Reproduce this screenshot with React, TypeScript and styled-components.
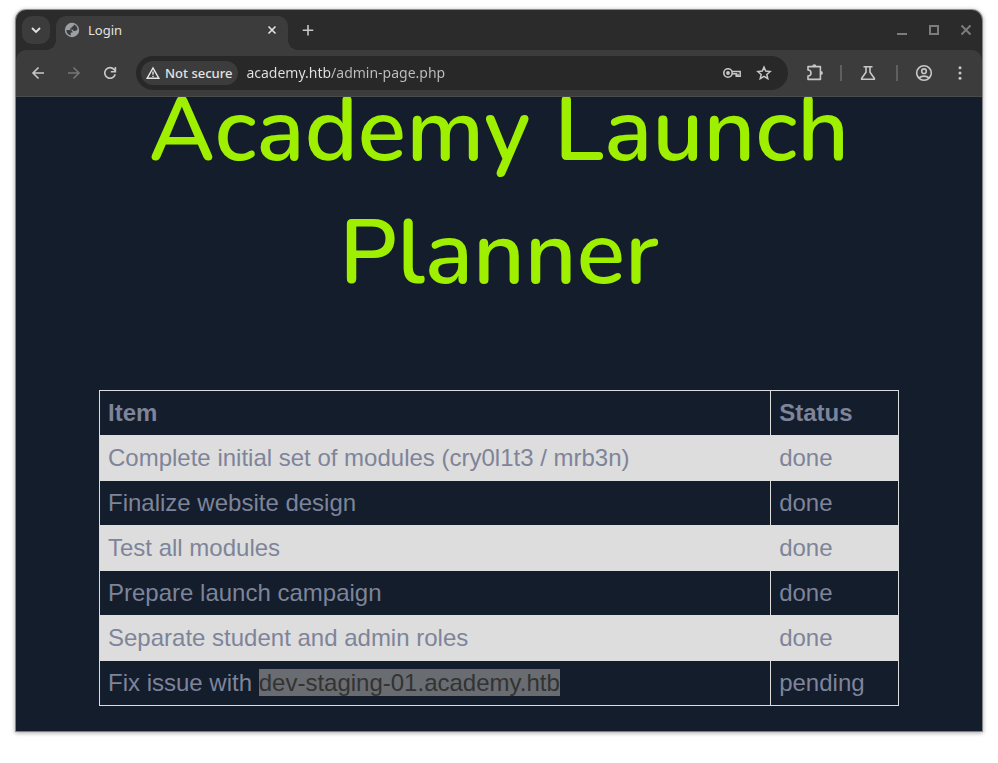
import React from "react";
import styled, { createGlobalStyle, css } from "styled-components";

const GlobalStyle = createGlobalStyle`
  *, *::before, *::after { box-sizing: border-box; }
  body {
    margin: 0;
    background: #ffffff;
    font-family: "Noto Sans", sans-serif;
  }
`;

const BrowserWindow = styled.div`
  margin: 10px 16px 32px;
  border-radius: 10px 10px 0 0;
  background: #2b2b2b;
  box-shadow: 0 0 0 1px rgba(0, 0, 0, 0.35), 0 1px 4px 1px rgba(0, 0, 0, 0.35);
`;

const TabStrip = styled.header`
  display: flex;
  align-items: center;
  height: 40px;
  padding: 0 6px;
`;

const iconButton = css`
  display: flex;
  flex: none;
  align-items: center;
  justify-content: center;
  margin: 0;
  padding: 0;
  border: 0;
  background: transparent;
  color: #c7c7c7;
`;

const TabSearchButton = styled.button`
  ${iconButton}
  width: 28px;
  height: 28px;
  border-radius: 10px;
  background: #3c3c3c;
  color: #e3e3e3;
`;

const Tab = styled.div`
  position: relative;
  display: flex;
  flex: 0 1 232px;
  align-items: center;
  align-self: flex-end;
  gap: 8px;
  height: 34px;
  margin-left: 6px;
  padding: 0 8px 6px;
  border-radius: 10px 10px 0 0;
  background: #3c3c3c;
  color: #e3e3e3;

  &::before,
  &::after {
    content: "";
    position: absolute;
    bottom: 0;
    width: 10px;
    height: 10px;
  }
  &::before {
    right: 100%;
    background: radial-gradient(circle at 0 0, transparent 10px, #3c3c3c 10px);
  }
  &::after {
    left: 100%;
    background: radial-gradient(circle at 100% 0, transparent 10px, #3c3c3c 10px);
  }
`;

const TabTitle = styled.span`
  flex: 1;
  font-size: 13px;
  line-height: 20px;
`;

const TabCloseButton = styled.button`
  ${iconButton}
  width: 16px;
  height: 16px;
  color: #e3e3e3;
`;

const NewTabButton = styled.button`
  ${iconButton}
  width: 28px;
  height: 28px;
  margin-left: 6px;
`;

const WindowControls = styled.div`
  display: flex;
  gap: 16px;
  margin-left: auto;
  padding-right: 2px;
`;

const WindowButton = styled.button`
  ${iconButton}
  width: 16px;
  height: 16px;
  color: #7c7c7c;
`;

const Toolbar = styled.nav`
  display: flex;
  align-items: center;
  height: 47px;
  padding: 0 8px;
  border-bottom: 1px solid #4a4a4a;
  border-radius: 10px 10px 0 0;
  background: #3c3c3c;
`;

const ButtonGroup = styled.div`
  display: flex;
  gap: 8px;
`;

const ToolButton = styled.button<{ $dim?: boolean }>`
  ${iconButton}
  width: 28px;
  height: 28px;
  color: ${(p) => (p.$dim ? "#757575" : "#c7c7c7")};
`;

const AddressBar = styled.div`
  display: flex;
  flex: 1;
  align-items: center;
  min-width: 0;
  height: 34px;
  margin: 0 13px 0 12px;
  padding: 0 10px 0 5px;
  border-radius: 17px;
  background: #282828;
`;

const SecurityChip = styled.button`
  display: flex;
  flex: none;
  align-items: center;
  gap: 4px;
  height: 24px;
  padding: 0 6px 0 4px;
  border: 0;
  border-radius: 12px;
  background: #3c3c3c;
  color: #e3e3e3;
  font: 500 13px/20px "Noto Sans", sans-serif;
  white-space: nowrap;
`;

const AddressInput = styled.input`
  flex: 1;
  min-width: 0;
  height: 24px;
  padding: 0;
  margin-left: 8px;
  border: 0;
  outline: 0;
  background: linear-gradient(to right, #e3e3e3 84px, #c0c0c0 84px);
  background-clip: text;
  -webkit-background-clip: text;
  color: transparent;
  font: 14px/24px "Noto Sans", sans-serif;
`;

const AddressActions = styled.div`
  display: flex;
  gap: 4px;
`;

const Extras = styled.div`
  display: flex;
  align-items: center;
`;

const Divider = styled.span<{ $spaced?: boolean }>`
  width: 2px;
  height: 16px;
  margin: ${(p) => (p.$spaced ? "0 12px 0 14px" : "0 12px 0 11px")};
  background: #5f5f5f;
`;

const ProfileGroup = styled.div`
  display: flex;
  gap: 8px;
`;

const PageView = styled.main`
  overflow: hidden;
  padding: 0 24px 25px;
  background: #141d2b;
`;

const Heading = styled.h1`
  max-width: 800px;
  margin: -28px auto 75px;
  color: #9fef00;
  font-family: Nunito, Lato, sans-serif;
  font-size: 90px;
  font-weight: 600;
  line-height: 123px;
  text-align: center;
`;

const PlannerTable = styled.table`
  width: 100%;
  max-width: 800px;
  margin: 0 auto;
  border-collapse: collapse;
  color: #7e8499;
  font-family: "Liberation Sans", Arial, sans-serif;
  font-size: 24px;
  line-height: 28px;
  text-align: left;
`;

const Row = styled.tr<{ $shaded?: boolean }>`
  background: ${(p) => (p.$shaded ? "#dddddd" : "transparent")};
`;

const HeadCell = styled.th<{ $narrow?: boolean }>`
  width: ${(p) => (p.$narrow ? "16%" : "84%")};
  padding: 8px;
  border: 1px solid #dddddd;
  font-weight: 700;
`;

const Cell = styled.td`
  padding: 8px;
  border: 1px solid #dddddd;
`;

const Selected = styled.mark`
  background: #696c70;
  color: #333333;
`;

type IconProps = { size?: number; view?: number; children: React.ReactNode };

const Line = ({ size = 16, view = 16, children }: IconProps) => (
  <svg
    width={size}
    height={size}
    viewBox={`0 0 ${view} ${view}`}
    fill="none"
    stroke="currentColor"
    strokeWidth="1.6"
    aria-hidden="true"
  >
    {children}
  </svg>
);

const rows = [
  { item: "Complete initial set of modules (cry0l1t3 / mrb3n)", status: "done" },
  { item: "Finalize website design", status: "done" },
  { item: "Test all modules", status: "done" },
  { item: "Prepare launch campaign", status: "done" },
  { item: "Separate student and admin roles", status: "done" },
  { item: "Fix issue with ", selected: "dev-staging-01.academy.htb", status: "pending" },
];

export default function App() {
  return (
    <>
      <GlobalStyle />
      <BrowserWindow>
        <TabStrip>
          <TabSearchButton aria-label="Search tabs">
            <Line><path d="M4 6 8 10l4-4" strokeWidth="1.8" /></Line>
          </TabSearchButton>
          <Tab>
            <svg width="16" height="16" viewBox="0 0 16 16" aria-hidden="true">
              <circle cx="8" cy="8" r="7.2" fill="#9aa0a6" />
              <path
                d="M2.4 8H6c1.9 0 2.600.9 2.600 2.500H6.700v2.900A5.700 5.700 0 0 1 2.400 8Z"
                fill="#3c3c3c"
              />
              <path
                d="M9.800 2.600c0 1.500-.7 2.200-2.200 2.200v1.500H6.100v1.400h2.300c1 0 1 .7 1 1.300h1.400c1.300 0 2.200-.6 2.700-1.700A5.700 5.700 0 0 0 9.800 2.600Z"
                fill="#3c3c3c"
              />
            </svg>
            <TabTitle>Login</TabTitle>
            <TabCloseButton aria-label="Close tab">
              <Line><path d="m4.500 4.500 7 7m0-7-7 7" /></Line>
            </TabCloseButton>
          </Tab>
          <NewTabButton aria-label="New tab">
            <Line><path d="M8 3v10.500M2.750 8.250h10.500" /></Line>
          </NewTabButton>
          <WindowControls>
            <WindowButton aria-label="Minimize">
              <Line><path d="M3 12h10" strokeWidth="2" /></Line>
            </WindowButton>
            <WindowButton aria-label="Maximize">
              <Line><path d="M4 4h8v8H4Z" strokeWidth="2" /></Line>
            </WindowButton>
            <WindowButton aria-label="Close window">
              <Line><path d="m3.500 3.500 9 9m0-9-9 9" strokeWidth="2" /></Line>
            </WindowButton>
          </WindowControls>
        </TabStrip>

        <Toolbar>
          <ButtonGroup>
            <ToolButton aria-label="Back">
              <Line><path d="M14 8H3m5.500-5.500L3 8l5.500 5.500" /></Line>
            </ToolButton>
            <ToolButton aria-label="Forward" $dim>
              <Line><path d="M2 8h11M7.500 2.500 13 8l-5.500 5.500" /></Line>
            </ToolButton>
            <ToolButton aria-label="Reload">
              <Line><path d="M13.200 9.200A5.300 5.300 0 1 1 12 4.400L13.600 6.200M13.400 2v4.800H8.800" /></Line>
            </ToolButton>
          </ButtonGroup>
          <AddressBar>
            <SecurityChip>
              <Line>
                <path d="M8 3 2.200 13.200h11.600Z" strokeWidth="1.500" />
                <path d="M8 6.500v3.200M8 10.700v1.300" strokeWidth="1.400" />
              </Line>
              Not secure
            </SecurityChip>
            <AddressInput aria-label="Address" defaultValue="academy.htb/admin-page.php" spellCheck={false} />
            <AddressActions>
              <ToolButton aria-label="Saved passwords">
                <Line size={20} view={20}>
                  <circle cx="6" cy="10" r="4.200" />
                  <circle cx="6" cy="10" r="1.900" fill="currentColor" stroke="none" />
                  <path d="M10 8.500h8.200v4.700h-4v-2.500H10M16 10.800v2.400" strokeWidth="1.500" />
                </Line>
              </ToolButton>
              <ToolButton aria-label="Bookmark this page">
                <Line>
                  <path d="m8 2.100 1.700 4 4.400.4-3.300 2.900 1 4.300L8 11.400l-3.800 2.300 1-4.300-3.300-2.900 4.400-.4Z" strokeWidth="1.500" />
                </Line>
              </ToolButton>
            </AddressActions>
          </AddressBar>
          <Extras>
            <ToolButton aria-label="Extensions">
              <Line size={20} view={20}>
                <path d="M3 3.600h12.400v12.800H3V13a3 3 0 0 0 0-6Z" strokeLinejoin="round" />
                <path d="M7.200 3.400a2.100 2.100 0 0 1 4.200 0ZM15.800 7.900a2.100 2.100 0 0 1 0 4.200Z" fill="currentColor" stroke="none" />
              </Line>
            </ToolButton>
            <Divider />
            <ToolButton aria-label="Experiments">
              <Line>
                <path d="M3.500 1.800h9M6 2v5.200l-4.300 6v1h12.600v-1L10 7.200V2" />
              </Line>
            </ToolButton>
            <Divider $spaced />
            <ProfileGroup>
              <ToolButton aria-label="Profile">
                <Line size={18} view={18}>
                  <circle cx="9" cy="9" r="7.300" />
                  <circle cx="9" cy="7.200" r="2.300" />
                  <path d="M4 13.800c2.500-2.300 7.500-2.300 10 0" />
                </Line>
              </ToolButton>
              <ToolButton aria-label="Menu">
                <svg width="16" height="16" viewBox="0 0 16 16" fill="currentColor" aria-hidden="true">
                  <circle cx="8" cy="2.700" r="1.500" />
                  <circle cx="8" cy="8" r="1.500" />
                  <circle cx="8" cy="13.300" r="1.500" />
                </svg>
              </ToolButton>
            </ProfileGroup>
          </Extras>
        </Toolbar>

        <PageView>
          <Heading>Academy Launch Planner</Heading>
          <PlannerTable>
            <thead>
              <Row>
                <HeadCell scope="col">Item</HeadCell>
                <HeadCell scope="col" $narrow>Status</HeadCell>
              </Row>
            </thead>
            <tbody>
              {rows.map((row, i) => (
                <Row key={row.item} $shaded={i % 2 === 0}>
                  <Cell>
                    {row.item}
                    {row.selected && <Selected>{row.selected}</Selected>}
                  </Cell>
                  <Cell>{row.status}</Cell>
                </Row>
              ))}
            </tbody>
          </PlannerTable>
        </PageView>
      </BrowserWindow>
    </>
  );
}
